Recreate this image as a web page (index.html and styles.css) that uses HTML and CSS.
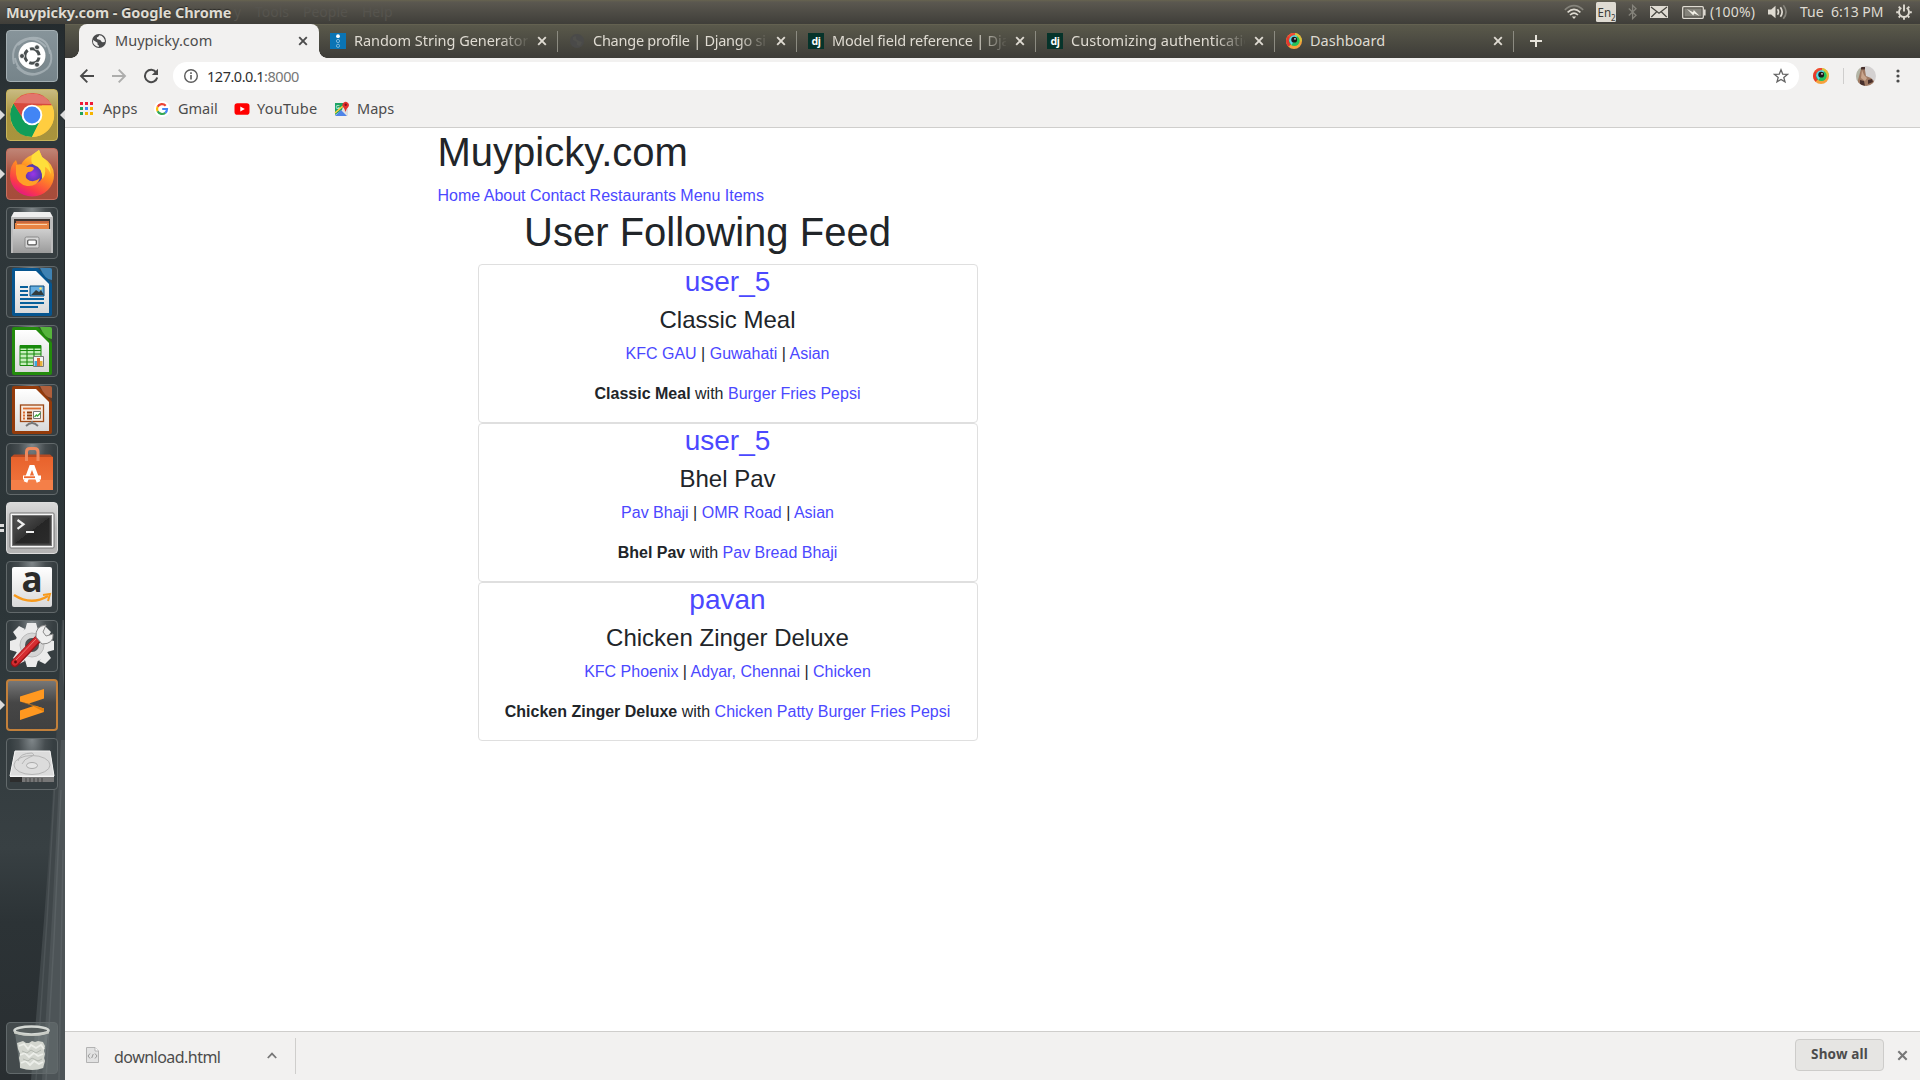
FILE: index.html
```html
<!DOCTYPE html>
<html lang="en">
<head>
<meta charset="utf-8">
<title>Muypicky.com</title>
<link rel="stylesheet" href="styles.css">
</head>
<body>
<svg class="defs" width="0" height="0" aria-hidden="true">
  <defs>
    <linearGradient id="paper" x1="0" y1="0" x2="0" y2="1"><stop offset="0" stop-color="#fff"/><stop offset="1" stop-color="#d9d9d9"/></linearGradient>
    <linearGradient id="steel" x1="0" y1="0" x2="0" y2="1"><stop offset="0" stop-color="#cfcfcf"/><stop offset="1" stop-color="#9b9b9b"/></linearGradient>
    <linearGradient id="flame" x1=".8" y1="0" x2=".3" y2="1"><stop offset="0" stop-color="#fff04a"/><stop offset=".45" stop-color="#ff9022"/><stop offset=".8" stop-color="#fb3b47"/><stop offset="1" stop-color="#e31587"/></linearGradient>
    <linearGradient id="bag" x1="0" y1="0" x2="0" y2="1"><stop offset="0" stop-color="#e8622c"/><stop offset="1" stop-color="#f1773f"/></linearGradient>
    <linearGradient id="screen" x1="0" y1="0" x2="1" y2="1"><stop offset="0" stop-color="#555"/><stop offset=".5" stop-color="#333"/><stop offset=".5" stop-color="#262626"/><stop offset="1" stop-color="#2b2b2b"/></linearGradient>
    <radialGradient id="violet"><stop offset="0" stop-color="#9a35e8"/><stop offset="1" stop-color="#4a38a5"/></radialGradient>
    <symbol id="close" viewBox="0 0 10 10"><path d="M1.2 1.2l7.6 7.6M8.8 1.2L1.2 8.8" stroke="currentColor" stroke-width="1.9" fill="none"/></symbol>
    <symbol id="dj" viewBox="0 0 16 16"><rect width="16" height="16" fill="#06332a"/><text x="8" y="11.6" text-anchor="middle" font-family="Noto Sans, sans-serif" font-weight="700" font-size="10.5" letter-spacing="-.4" fill="#fff">dj</text></symbol>
    <symbol id="eye" viewBox="0 0 16 16"><circle cx="8" cy="8" r="8" fill="#f6a13c"/><path d="M2 2.7A8 8 0 0 0 2.4 13.700L5.500 11V4z" fill="#e4382f"/><path d="M2 2.700A8 8 0 0 1 9 0l1.500 4L4 6z" fill="#ef4a36"/><path d="M9 0a8 8 0 0 1 7 8l-3 1-4-6z" fill="#d9c33d"/><circle cx="8.400" cy="7.700" r="5.300" fill="#25c25b"/><path d="M3.100 7.700a5.300 5.300 0 0 1 8-4.600L8.400 8l-3 4z" fill="#59d6e8"/><circle cx="8.200" cy="6.700" r="2.900" fill="#1c1719"/><circle cx="9" cy="5.800" r=".9" fill="#ddd"/></symbol>
  </defs>
</svg>

<header class="panel">
  <div class="panel-left">
    <span class="panel-title">Muypicky.com - Google Chrome</span>
    <span class="ghost ghost-y">y</span><span class="ghost ghost-tools">Tools</span><span class="ghost ghost-people">People</span><span class="ghost ghost-help">Help</span>
  </div>
  <div class="indicators">
    <svg class="i-wifi" width="20" height="16" viewBox="0 0 20 16" fill="none" stroke="#dfdbd2" stroke-width="1.6"><path d="M.8 5.8Q10-2.6 19.2 5.8" stroke="#85837b"/><path d="M3.600 8.400Q10 2.300 16.400 8.400M6 11Q10 7.200 14 11"/><path d="M7.800 12.400h4.400L10 15z" fill="#dfdbd2" stroke="none"/></svg>
    <svg class="i-lang" width="20" height="20" viewBox="0 0 20 20"><rect width="20" height="20" rx="1.5" fill="#dfdbd2"/><text x="1.6" y="15" font-size="12.5" textLength="13.5" lengthAdjust="spacingAndGlyphs" fill="#3c3b37">En</text><text x="15" y="18.5" font-size="8" fill="#3c3b37">2</text></svg>
    <svg class="i-bt" width="9" height="16" viewBox="0 0 9 16" fill="none" stroke="#85837b" stroke-width="1.3"><path d="M.8 4.500L8 11.200 4.600 14.600V1.400L8 4.800.8 11.500"/></svg>
    <svg class="i-mail" width="18" height="12" viewBox="0 0 18 12"><rect width="18" height="12" fill="#dfdbd2"/><path d="M1 1l8 6.300L17 1M1.300 11L6.500 6M16.700 11L11.500 6" stroke="#45443e" stroke-width="1.200" fill="none"/></svg>
    <svg class="i-bat" width="24" height="13" viewBox="0 0 24 13"><rect x=".7" y=".7" width="20.6" height="11.600" rx="1" fill="none" stroke="#dfdbd2" stroke-width="1.300"/><rect x="2.500" y="2.500" width="17" height="8" fill="#85837b"/><path d="M22 3.500h1.600v6H22z" fill="#dfdbd2"/><path d="M5 3l6 3.200.8-2.200 5.800 6-5.400-2.500-.9 2z" fill="#f2efe6"/></svg>
    <span class="i-pct">(100%)</span>
    <svg class="i-vol" width="20" height="16" viewBox="0 0 20 16" fill="none" stroke="#dfdbd2" stroke-width="1.7"><path d="M0 5.500h3.200L7.500 1.800v12.400L3.200 10.500H0z" fill="#dfdbd2" stroke="none"/><path d="M9.500 5.300q2 2.700 0 5.400M12.400 3.200q3.500 4.800 0 9.600"/><path d="M15.300 1.300q5.500 6.700 0 13.400" stroke="#85837b"/></svg>
    <span class="i-clock">Tue&nbsp; 6:13 PM</span>
    <svg class="i-gear" width="16" height="16" viewBox="0 0 16 16" fill="none" stroke="#dfdbd2"><path d="M5.300 3.800a5 5 0 1 0 5.400 0" stroke-width="1.900"/><path d="M8 .5v7M2.700 2.700L4 4M13.300 2.700L12 4M.2 8.300h2.300M13.500 8.300h2.300M2.700 13.500L4 12.200M13.300 13.500L12 12.200M8 13.500v2.300" stroke-width="1.900"/></svg>
  </div>
</header>

<div class="desktop">
<nav class="launcher">
  <svg class="wall" width="65" height="1056" viewBox="0 24 65 1056" preserveAspectRatio="none">
    <defs><linearGradient id="wl" x1="0" y1="0" x2="0" y2="1"><stop offset="0" stop-color="#242b2e"/><stop offset=".1" stop-color="#2f373a"/><stop offset=".55" stop-color="#2c3538"/><stop offset=".78" stop-color="#384043"/><stop offset=".85" stop-color="#2c3336"/><stop offset="1" stop-color="#292e31"/></linearGradient></defs>
    <rect y="24" width="65" height="1056" fill="url(#wl)"/>
    <path d="M62 620Q56 760 44 920L31 1080H65V620z" fill="#40474a"/>
    <path d="M61 740L53 900 42 1080H65V740z" fill="#4d5457"/>
    <path d="M55 780L47 920 36 1080M64 620Q61 660 65 690" stroke="#4d5457" stroke-width="1.500" fill="none"/>
    <path d="M61 790L54 940 46 1080M63 850L59 1080" stroke="#596063" stroke-width="1.500" fill="none"/>
    <path d="M64.500 24V700" stroke="#24292b"/>
  </svg>

  <div class="tile t-ubuntu"><svg viewBox="0 0 52 52"><path d="M8 34Q3 12 24 8Q42 6 44 24M12 15Q26 2 40 17M44 20Q50 40 29 44Q12 44 9 28M42 38Q25 52 11 37" fill="none" stroke="#c5ced1" stroke-width="2" opacity=".5"/><circle cx="26" cy="26.500" r="13.800" fill="#7b8588"/><circle cx="26" cy="25.500" r="13.500" fill="#fff"/><circle cx="26" cy="26" r="7.200" fill="none" stroke="#494f50" stroke-width="3" stroke-dasharray="12.500 2.580" stroke-dashoffset="-1.500"/><g fill="#494f50" stroke="#fff" stroke-width=".8"><circle cx="16" cy="26" r="2.500"/><circle cx="31" cy="17.300" r="2.500"/><circle cx="31" cy="34.700" r="2.500"/></g></svg></div>
  <div class="tile t-chrome"><i class="mark"></i><i class="mark-right"></i><svg viewBox="0 0 52 52"><circle cx="26" cy="26" r="22" fill="#ffcd40"/><path d="M7.500 14.500A22 22 0 0 0 26 48l8-16-15 0z" fill="#109d59"/><path d="M7.500 14.500A22 22 0 0 1 46 16.500H26L17 30z" fill="#d8493d"/><path d="M8 14A22 22 0 0 1 45 15z" fill="#fff" opacity=".25"/><path d="M46 16.500A22 22 0 0 1 26 48l10-20V16.500z" fill="#ffcd40"/><circle cx="26" cy="26" r="10.300" fill="#fff"/><circle cx="26" cy="26" r="8.400" fill="#4285f4"/></svg></div>
  <div class="tile t-firefox"><i class="mark"></i><svg viewBox="0 0 52 52"><path d="M26 7L33 2l3 7q12 7 12 18A22 21 0 0 1 4 28Q4 17 10 12l2 6 3-1q3-7 11-10z" fill="url(#flame)"/><circle cx="27" cy="26" r="10" fill="url(#violet)"/><path d="M10 17q7-2 11 2 5-1 7 1-1 4-6 4-4 4-1 7 6 5 13-1-3 9-13 8-10-2-11-12z" fill="#ffa026"/><path d="M26 7L33 2l3 7q8 5 9 17-3-6-6-7 1 9-3 12 1-11-8-14-4-2-2-10z" fill="#fedf3b"/></svg></div>
  <div class="tile"><svg viewBox="0 0 52 52"><path d="M8 5h36l3 5v36H5V10z" fill="#bdbdbd"/><path d="M8 5h36l2.500 5h-41z" fill="#efefef"/><path d="M8 12h36v12H8z" fill="#3a3330"/><path d="M10 14h33v3H10z" fill="#c7683f"/><path d="M9 16h34v7H9z" fill="#e88443"/><path d="M11 17.500h30" stroke="#f9d1ad"/><path d="M7 22h38v24H7z" fill="url(#steel)"/><rect x="19" y="30" width="14" height="11" rx="1.500" fill="#d6d6d6" stroke="#888"/><rect x="21.700" y="33" width="8.600" height="4.800" rx="1" fill="#fff" stroke="#555" stroke-width="1.200"/></svg></div>
  <div class="tile"><svg viewBox="0 0 52 52"><path d="M8 2h36q2 0 2 2v44q0 2-2 2H8q-2 0-2-2V4q0-2 2-2z" fill="#06558f"/><path d="M32 2h12q2 0 2 2v14z" fill="#2b4a60"/><path d="M9 5h21l13 13v29H9z" fill="url(#paper)"/><path d="M34 2h10q2 0 2 2v10q-7 0-12-12z" fill="#3f82b3"/><path d="M14 21h8M14 25h8M14 29h8M14 33h24M14 37h24M14 41h18" stroke="#08609b" stroke-width="1.800"/><path d="M24 20h14v10H24z" fill="#66aee0" stroke="#064b7d"/><path d="M25 29l5-5 3 2 2-2 3 5z" fill="#333c3d"/><circle cx="34.500" cy="22.500" r="1.300" fill="#ffe36a"/></svg></div>
  <div class="tile"><svg viewBox="0 0 52 52"><path d="M8 2h36q2 0 2 2v44q0 2-2 2H8q-2 0-2-2V4q0-2 2-2z" fill="#238b0c"/><path d="M32 2h12q2 0 2 2v14z" fill="#2f5a28"/><path d="M9 5h21l13 13v29H9z" fill="url(#paper)"/><path d="M34 2h10q2 0 2 2v10q-7 0-12-12z" fill="#56b53c"/><path d="M14 20.500h21v20H14z" fill="#c6eebc" stroke="#198a0c"/><path d="M14 22h21" stroke="#198a0c" stroke-width="3"/><path d="M14 25.500h21M14 29h21M14 33h21M14 37h21M21 20v20M28 20v20" stroke="#198a0c" stroke-width="1.100"/><path d="M27.500 31.500h10v10h-10z" fill="#f3f3f3" stroke="#777"/><path d="M28.500 36h2.500v5h-2.500z" fill="#3ba8de"/><path d="M31 33h3v8h-3z" fill="#df6b35"/><path d="M34 36h2.500v5H34z" fill="#e6b23c"/></svg></div>
  <div class="tile"><svg viewBox="0 0 52 52"><path d="M8 2h36q2 0 2 2v44q0 2-2 2H8q-2 0-2-2V4q0-2 2-2z" fill="#943b0b"/><path d="M32 2h12q2 0 2 2v14z" fill="#5f3a28"/><path d="M9 5h21l13 13v29H9z" fill="url(#paper)"/><path d="M34 2h10q2 0 2 2v10q-7 0-12-12z" fill="#b05f3b"/><rect x="14.500" y="21" width="23" height="16.500" fill="#f6eadf" stroke="#9d4714" stroke-width="1.300"/><path d="M17 24.500h18" stroke="#db6d31" stroke-width="1.800"/><path d="M17 28.500h2M17 31.500h2M17 34.500h2" stroke="#db6d31" stroke-width="2"/><path d="M21 28.500h5M21 31.500h5M21 34.500h5" stroke="#883a0c" stroke-width="2"/><path d="M27.500 27.500h7v7h-7z" fill="#fff" stroke="#777"/><path d="M28.500 33l2-2 1 1 3-3" stroke="#3aa63c" stroke-width="1.300" fill="none"/><path d="M20 42q6-6 12 0M26 37v2" fill="none" stroke="#777" stroke-width="1.800"/></svg></div>
  <div class="tile"><svg viewBox="0 0 52 52"><path d="M5 14h42v33H5z" fill="url(#bag)"/><path d="M5 14l3-2.500h36l3 2.500z" fill="#b94a22"/><path d="M20.500 18V9q0-3.500 3.500-3.500h4.500Q32 5.500 32 9v9" fill="none" stroke="#ef8a5f" stroke-width="3"/><path d="M5 37h42v10H5z" fill="#f47f48"/><path d="M19.500 39L25 24h2l5.500 15" fill="none" stroke="#fff" stroke-width="3.800"/><path d="M17 34.500h18" stroke="#fff" stroke-width="4"/><path d="M18 34.200h11" stroke="#ee6930" stroke-width="1.800"/></svg></div>
  <div class="tile t-term"><i class="mark-two"></i><svg viewBox="0 0 52 52"><rect x="4" y="11" width="44" height="35" rx="1" fill="#f7f7f7" stroke="#727272"/><rect x="6.500" y="13.500" width="39" height="30" fill="#444" stroke="#777"/><rect x="8.500" y="15.500" width="35" height="26" fill="url(#screen)"/><path d="M11.500 18l6 4.300-6 4.500" fill="none" stroke="#eee" stroke-width="2.200"/><path d="M20 30h8" stroke="#eee" stroke-width="2"/></svg></div>
  <div class="tile"><svg viewBox="0 0 52 52"><rect x="6" y="6" width="40" height="40" rx="2" fill="url(#paper)"/><text x="26" y="31" text-anchor="middle" font-family="Open Sans, sans-serif" font-weight="700" font-size="35" fill="#2b2b2b">a</text><path d="M8 34q17 11 34 1" stroke="#f79a1c" stroke-width="2.500" fill="none"/><path d="M37 34l7-1-2 7" stroke="#f79a1c" stroke-width="2" fill="none"/></svg></div>
  <div class="tile"><svg viewBox="0 0 52 52"><g fill="#ebebeb"><circle cx="26" cy="25" r="17"/><path d="M21 3h9l2 7H19zM21 47h9l2-7H19zM4 21v9l7 2V19zM48 21v9l-7 2V19zM7 12l6-6 6 3-8 9zM45 12l-6-6-6 3 8 9zM7 38l6 6 6-3-8-9zM45 38l-6 6-6-3 8-9z"/></g><circle cx="26" cy="25" r="12" fill="#d5d5d5" stroke="#bbb"/><circle cx="26" cy="25" r="7" fill="#4b5052"/><path d="M9 43L33 18" stroke="#9a1418" stroke-width="8" stroke-linecap="round"/><path d="M9 42.500L31 19.500" stroke="#d52c30" stroke-width="6" stroke-linecap="round"/><path d="M10 40L30 19" stroke="#ef7674" stroke-width="1"/><path d="M30 17q-1-11 10-12l-3 7 3 4 7-2q1 10-11 10z" fill="#efefef" stroke="#8c8c8c"/><circle cx="9.500" cy="42" r="1.400" fill="#5e0c0e"/></svg></div>
  <div class="tile t-sublime"><i class="mark"></i><svg viewBox="0 0 52 52"><path d="M14 17.500L38 10v9.500L23 24.500l15 5V33L14 41v-9.500l15-5-15-4z" fill="#ff9820"/><path d="M14 22.500L38 29.500V33l-11-6z" fill="#e27f0c"/></svg></div>
  <div class="tile"><svg viewBox="0 0 52 52"><path d="M9 13h35l4 25v6H4v-6z" fill="#cfcfcf"/><path d="M9 13h35l4 25H4z" fill="#dcdcdc" stroke="#f2f2f2"/><path d="M4 38h44v6H4z" fill="#777"/><path d="M4 38h44v1H4z" fill="#f5f5f5"/><path d="M4 39h12v5H4z" fill="#2d2d2d"/><path d="M20 40v4M24 40v4M28 40v4M32 40v4M36 40v4" stroke="#444"/><ellipse cx="26" cy="27" rx="18" ry="9.500" fill="none" stroke="#b5b5b5"/><ellipse cx="26" cy="27.500" rx="5.500" ry="3" fill="#e5e5e5" stroke="#aaa"/><path d="M12 23q2-8 14-8 4 2-2 4t-8 7" fill="none" stroke="#b5b5b5"/></svg></div>
  <div class="tile t-trash"><svg viewBox="0 0 52 52"><path d="M9 11h33l-4 35q-12 4-24 0z" fill="#929b9b" opacity=".4"/><path d="M11 21l3 -1 3-1 3 2 3 0 3-2 3 1 3-1 5 1 2 4-1 5 1 3-1 4 1 3-2 7q-10 4-23 0l0-5-1-5 1-4-2-5z" fill="#d3d6cf"/><path d="M13 24l5-2 4 5 3-4 5 3 5-3 3 4M14 33l5-2 4 4 5-4 4 3 5-2M15 41l5-2 4 4 4-4 5 3 4-2" stroke="#eceee9" stroke-width="1.800" fill="none"/><path d="M16 29l5 2 4-3 5 3 5-3M17 37l5 2 4-3 6 3 4-2" stroke="#b3b8b0" fill="none"/><ellipse cx="25.500" cy="8.500" rx="17" ry="4" fill="#555c5c" stroke="#d4d8d4" stroke-width="2.600"/><path d="M8 9q17 7 35 0v2.500q-17 5-35 0z" fill="#c9ccc5"/></svg></div>
</nav>

<section class="window">
  <div class="tabs">
    <div class="tab active"><svg class="fav" width="16" height="16" viewBox="0 0 16 16"><circle cx="8" cy="8" r="7" fill="#4a4b4c"/><path d="M8.200 2.300q-.5 2-2.400 2.200-.3 2 1.700 2 2.300.1 2.700 1.700.8 1.500 2.700.8l.9 0A6 6 0 0 0 8.200 2.300zM2 7l4.500 2.800v1.600l1.300 1v1.500A6 6 0 0 1 2 7z" fill="#f2f1f0"/></svg><span class="tab-title w1">Muypicky.com</span><svg class="x" width="10" height="10"><use href="#close"/></svg></div>
    <div class="tab"><svg class="fav" width="16" height="16" viewBox="0 0 16 16"><rect width="16" height="16" fill="#0a74b5"/><circle cx="8" cy="3.200" r="1.900" fill="#fff"/><g fill="none" stroke="#77b5da"><circle cx="8" cy="8" r="1.600"/><circle cx="8" cy="12.800" r="1.600"/></g></svg><span class="tab-title w2 fade">Random String Generator</span><svg class="x" width="10" height="10"><use href="#close"/></svg></div>
    <div class="tab"><svg class="fav" width="16" height="16" viewBox="0 0 16 16"><circle cx="8" cy="8" r="7" fill="#4a4a49"/><path d="M4 4l3-1v3l3 2 3 1-2 4-3-1V9L4 7z" fill="#50504c"/></svg><span class="tab-title w3 fade">Change profile | Django si</span><svg class="x" width="10" height="10"><use href="#close"/></svg></div>
    <div class="tab"><svg class="fav" width="16" height="16"><use href="#dj"/></svg><span class="tab-title w4 fade">Model field reference | Dja</span><svg class="x" width="10" height="10"><use href="#close"/></svg></div>
    <div class="tab"><svg class="fav" width="16" height="16"><use href="#dj"/></svg><span class="tab-title w5 fade">Customizing authenticatio</span><svg class="x" width="10" height="10"><use href="#close"/></svg></div>
    <div class="tab"><svg class="fav" width="16" height="16"><use href="#eye"/></svg><span class="tab-title w6">Dashboard</span><svg class="x" width="10" height="10"><use href="#close"/></svg></div>
    <svg class="plus" width="12" height="12" viewBox="0 0 12 12"><path d="M6 0v12M0 6h12" stroke="#e6e3da" stroke-width="2"/></svg>
  </div>

  <div class="toolbar">
    <svg class="nav-ic" width="16" height="16" viewBox="0 0 16 16" fill="none" stroke="#4a4a4a" stroke-width="1.900"><path d="M15 8H2.500M8.300 1.600L2 8l6.300 6.400"/></svg>
    <svg class="nav-ic" width="16" height="16" viewBox="0 0 16 16" fill="none" stroke="#adadac" stroke-width="1.900"><path d="M1 8h12.500M7.700 1.600L14 8l-6.300 6.400"/></svg>
    <svg class="nav-ic" width="16" height="16" viewBox="0 0 16 16"><path d="M13.300 4.500A6.200 6.200 0 1 0 14.200 9.500" fill="none" stroke="#4a4a4a" stroke-width="2"/><path d="M15 .8V7H8.800z" fill="#4a4a4a"/></svg>
    <div class="omnibox">
      <svg width="16" height="16" viewBox="0 0 16 16"><circle cx="8" cy="8" r="6.300" fill="none" stroke="#5c5c5c" stroke-width="1.400"/><path d="M8 7v4.500M8 4.300v1.700" stroke="#5c5c5c" stroke-width="1.600"/></svg>
      <span class="url">127.0.0.1<span class="port">:8000</span></span>
      <svg class="star" width="16" height="16" viewBox="0 0 16 16"><path d="M8 1.800l1.700 4.300 4.700.3-3.600 3 1.200 4.500L8 11.400l-4 2.500 1.200-4.500-3.600-3 4.700-.3z" fill="none" stroke="#656565" stroke-width="1.300"/></svg>
    </div>
    <svg class="ext" width="16" height="16"><use href="#eye"/></svg>
    <span class="divider"></span>
    <svg class="avatar" width="20" height="20" viewBox="0 0 20 20"><defs><clipPath id="ac"><circle cx="10" cy="10" r="10"/></clipPath></defs><g clip-path="url(#ac)"><path d="M0 0h20v20H0z" fill="#d4d1d1"/><path d="M0 0h5v20H0z" fill="#b3b5a6"/><path d="M5 3q3-3 4 1l1 6 5 2 3 3-1 6H2l0-7z" fill="#a07a63"/><path d="M5 1h4v2.500H5zM4 14l4 1 1 5H4zM12 14l4-1 1 3-5 2z" fill="#48302c"/><path d="M6 4l2 5 3 3-2 3-4-3z" fill="#c9a58c"/></g></svg>
    <svg class="dots" width="4" height="14" viewBox="0 0 4 14" fill="#4a4a4a"><circle cx="2" cy="2" r="1.600"/><circle cx="2" cy="7" r="1.600"/><circle cx="2" cy="12" r="1.600"/></svg>
  </div>

  <div class="bookmarks">
    <span class="bm"><svg width="14" height="14" viewBox="0 0 14 14"><path d="M0 0h3v3H0zM5 0h3v3H5zM10 0h3v3h-3z" fill="#ef1b39"/><path d="M0 5h3v3H0z" fill="#1fa35b"/><path d="M5 5h3v3H5z" fill="#4285f4"/><path d="M10 5h3v3h-3zM5 10h3v3H5zM10 10h3v3h-3z" fill="#f5b400"/><path d="M0 10h3v3H0z" fill="#1fa35b"/></svg><b class="b1">Apps</b></span>
    <span class="bm"><svg width="16" height="16" viewBox="0 0 16 16"><circle cx="8" cy="8" r="8" fill="#fff"/><g fill="none" stroke-width="2.200"><path d="M11.700 4.700A5 5 0 0 0 3.600 5.700" stroke="#ea4335"/><path d="M3.600 5.700a5 5 0 0 0 0 4.600" stroke="#fbbc05"/><path d="M3.600 10.300a5 5 0 0 0 7.700 1.500" stroke="#34a853"/><path d="M11.300 11.800A5 5 0 0 0 13 8H8.200" stroke="#4285f4"/></g></svg><b class="b2">Gmail</b></span>
    <span class="bm"><svg width="16" height="16" viewBox="0 0 16 16"><rect x=".5" y="2.300" width="15" height="11.400" rx="2.800" fill="#f00"/><path d="M6.300 5.500v5L10.800 8z" fill="#fff"/></svg><b class="b3">YouTube</b></span>
    <span class="bm"><svg width="16" height="16" viewBox="0 0 16 16"><rect x="1" y="2" width="13" height="13" rx="1" fill="#e8e8e8"/><path d="M1 2h9L8 9l-7 5z" fill="#1fa463"/><path d="M1 15l6-6 6 6z" fill="#4f84e8"/><path d="M1 12L9 5" stroke="#ffcf3f" stroke-width="1.500"/><path d="M8 9l6 6V8z" fill="#ddd"/><text x="1.800" y="7.500" font-size="5.500" fill="#fff">G</text><path d="M11.500 11Q11 8 9 6a3.200 3.200 0 1 1 5.300 0q-2.300 2-2.800 5z" fill="#e5302c"/><circle cx="11.700" cy="3.800" r="1.200" fill="#84131b"/></svg><b class="b4">Maps</b></span>
  </div>

  <main class="page">
    <div class="container">
      <h1>Muypicky.com</h1>
      <div class="menu"><a>Home</a> <a>About</a> <a>Contact</a> <a>Restaurants</a> <a>Menu Items</a></div>
      <div class="feed">
        <h1>User Following Feed</h1>
        <div class="cards">
          <article class="card"><h3><a>user_5</a></h3><h4>Classic Meal</h4><p><a>KFC GAU</a> | <a>Guwahati</a> | <a>Asian</a></p><p><strong>Classic Meal</strong> with <a>Burger Fries Pepsi</a></p></article>
          <article class="card"><h3><a>user_5</a></h3><h4>Bhel Pav</h4><p><a>Pav Bhaji</a> | <a>OMR Road</a> | <a>Asian</a></p><p><strong>Bhel Pav</strong> with <a>Pav Bread Bhaji</a></p></article>
          <article class="card"><h3><a>pavan</a></h3><h4>Chicken Zinger Deluxe</h4><p><a>KFC Phoenix</a> | <a>Adyar, Chennai</a> | <a>Chicken</a></p><p><strong>Chicken Zinger Deluxe</strong> with <a>Chicken Patty Burger Fries Pepsi</a></p></article>
        </div>
      </div>
    </div>
  </main>

  <footer class="downloads">
    <svg class="file" width="13" height="16" viewBox="0 0 13 16"><path d="M.5.500h8.500l3.500 3.500v11.500H.5z" fill="#e2e2e2" stroke="#b3b3b3"/><path d="M9 .5V4h3.500" fill="#fff" stroke="#b3b3b3"/><path d="M4 6.500L2 9l2 2.500M9 6.500L11 9l-2 2.500M7.300 7L5.700 11" fill="none" stroke="#999"/></svg>
    <span class="fname">download.html</span>
    <svg class="caret" width="10" height="7" viewBox="0 0 10 7"><path d="M.8 6L5 1.600 9.200 6" fill="none" stroke="#777" stroke-width="1.800"/></svg>
    <span class="sep"></span>
    <button class="show">Show all</button>
    <svg class="dx" width="11" height="11"><use href="#close"/></svg>
  </footer>
</section>
</div>
</body>
</html>
```
FILE: styles.css
```css
* { box-sizing: border-box; }
html, body { margin: 0; height: 100%; overflow: hidden; }
body { font-family: "Noto Sans", sans-serif; font-size: 14.5px; color: #4c4c4c; display: flex; flex-direction: column; }
svg { display: block; flex: none; }
.defs { position: absolute; }

.panel { height: 24px; flex: none; display: flex; align-items: center; justify-content: space-between; background: linear-gradient(#67634f 0, #5b5850 2px, #3f3e39 24px); color: #dfdbd2; font-size: 14px; line-height: 24px; }
.panel-left { display: flex; padding-left: 6px; white-space: nowrap; }
.panel-title { width: 228px; font-weight: 700; font-size: 14.5px; letter-spacing: -.07px; text-shadow: 0 -1px 1px #2c2b28; }
.ghost { color: #56544e; }
.ghost-y { width: 21px; }
.ghost-tools { width: 48px; }
.ghost-people { width: 59px; }
.indicators { display: flex; align-items: center; width: 356px; }
.i-lang { margin-left: 12px; }
.i-bt { margin-left: 12px; }
.i-mail { margin-left: 13px; }
.i-bat { margin-left: 14px; }
.i-pct { margin-left: 4px; width: 58px; white-space: nowrap; letter-spacing: .2px; }
.i-clock { margin-left: 12px; width: 96px; white-space: nowrap; }

.desktop { flex: 1; display: flex; min-height: 0; }
.launcher { width: 65px; flex: none; position: relative; padding: 6px 7px 6px 6px; display: flex; flex-direction: column; gap: 7px; overflow: hidden; }
.wall { position: absolute; inset: 0; }
.tile { position: relative; width: 52px; height: 52px; flex: none; border-radius: 4px; border: 1px solid #62696b; background: radial-gradient(ellipse at 50% 0, #80878a 0, #454c4f 38%, transparent 62%), #363e41; }
.tile svg { width: 52px; height: 52px; margin: -1px; overflow: visible; }
.t-ubuntu { background: linear-gradient(#87949a, #76848a); border-color: #a4afb3; }
.t-chrome { background: linear-gradient(#c9bb81, #a7923e 50%, #a9943c); border-color: #c9b55c; }
.t-firefox { background: linear-gradient(#c08576, #a84f3c 50%, #a64c3b); border-color: #c7705f; }
.t-term { background: linear-gradient(#d9d9d9, #b8b8b8 50%, #b4b4b4); border-color: #dcdcdc; }
.t-sublime { background: linear-gradient(#777, #464646 45%, #404040); border: 2px solid #c2803b; }
.t-sublime svg { margin: -2px; }
.t-trash { margin-top: auto; background: rgba(130, 140, 140, .3); }
.mark, .mark-right, .mark-two { position: absolute; top: 20px; border: 5px solid transparent; }
.mark { left: -7px; border-left-color: #dcdcdc; border-right: 0; }
.mark-right { right: -8px; border-right-color: #dcdcdc; border-left: 0; }
.t-sublime .mark { left: -8px; top: 19px; }
.mark-two { left: -7px; top: 21px; width: 4px; height: 8px; border: solid #dcdcdc; border-width: 3px 0; }

.window { flex: 1; min-width: 0; display: flex; flex-direction: column; background: #f2f1f0; }
.tabs { height: 34px; flex: none; display: flex; align-items: center; padding-left: 14px; background: linear-gradient(#6c6956 0, #5a594b 1px, #3d3c38 34px); color: #dfdbd2; }
.tab { width: 239px; height: 34px; flex: none; display: flex; align-items: center; padding-left: 11px; position: relative; }
.tab:not(.active)::after { content: ""; position: absolute; right: 0; top: 7px; width: 1px; height: 21px; background: #8c8b81; }
.tab.active { width: 240px; background: #f2f1f0; color: #4c4c4c; border-radius: 8px 8px 0 0; padding-left: 12px; }
.tab.active::before, .tab.active::after { content: ""; position: absolute; bottom: 0; width: 8px; height: 8px; }
.tab.active::before { left: -8px; background: radial-gradient(circle at 0 0, transparent 7.5px, #f2f1f0 8px); }
.tab.active::after { right: -8px; background: radial-gradient(circle at 100% 0, transparent 7.5px, #f2f1f0 8px); }
.tab-title { margin-left: 8px; width: 174px; overflow: hidden; white-space: nowrap; line-height: 20px; letter-spacing: -.25px; margin-top: -2px; }
.w1 { letter-spacing: .03px; }
.w2 { letter-spacing: -.04px; }
.w4 { letter-spacing: -.2px; }
.w5 { letter-spacing: .1px; }
.w6 { letter-spacing: 0; }
.fade { -webkit-mask-image: linear-gradient(90deg, #000 145px, transparent 176px); mask-image: linear-gradient(90deg, #000 145px, transparent 176px); }
.x { margin-left: 9px; }
.plus { margin-left: 16px; }

.toolbar { height: 36px; flex: none; display: flex; align-items: center; padding-left: 14px; }
.nav-ic { margin-right: 16px; }
.omnibox { width: 1626px; height: 28px; background: #fff; border-radius: 14px; display: flex; align-items: center; padding: 0 10px; margin-left: -2px; }
.url { margin-left: 8px; color: #303030; flex: 1; letter-spacing: -.48px; line-height: 20px; margin-top: -1px; }
.port { color: #777; }
.ext { margin-left: 14px; }
.divider { width: 1px; height: 16px; margin: 0 12px 0 14px; background: #cfcecd; }
.dots { margin-left: 20px; }

.bookmarks { height: 34px; flex: none; display: flex; align-items: center; padding: 0 0 4px 15px; border-bottom: 1px solid #cfcecc; }
.bm { display: flex; align-items: center; }
.bm b { font-weight: 400; line-height: 20px; white-space: nowrap; margin: -2px 0 0 8px; }
.bm .b1 { width: 51px; margin-left: 9px; letter-spacing: .1px; }
.bm .b2 { width: 56px; margin-left: 8px; }
.bm .b3 { width: 77px; margin-left: 7px; letter-spacing: .25px; }
.bm .b4 { margin-left: 7px; }

.page { flex: 1; min-height: 0; background: #fff; color: #212529; font-family: "Liberation Sans", Arial, sans-serif; font-size: 16px; line-height: 24px; }
.container { width: 1140px; margin: 0 auto; padding: 0 15px; }
.page a { color: #4b48ff; }
.page h1, .page h3, .page h4 { font-weight: 400; margin: 0 0 8px; }
.page h1 { font-size: 40px; line-height: 48px; }
.page h3 { font-size: 28px; line-height: 33px; }
.page h4 { font-size: 24px; line-height: 28px; }
.feed { width: 540px; text-align: center; }
.cards { padding-left: 40px; }
.card { height: 159px; border: 1px solid #dfdfdf; border-radius: 4px; }
.card p { margin: 0 0 16px; }

.downloads { height: 49px; flex: none; border-top: 1px solid #cfcecc; display: flex; align-items: center; padding-left: 21px; padding-bottom: 1px; }
.file { margin-top: -1px; }
.fname { margin-left: 15px; width: 153px; font-size: 16px; letter-spacing: -.53px; line-height: 24px; margin-top: 2px; }
.sep { width: 1px; height: 36px; margin-left: 18px; margin-top: 1px; background: #cfcecc; }
.show { margin-left: auto; width: 89px; height: 32px; margin-top: -2px; border: 1px solid #cdccca; border-radius: 4px; background: #e6e5e3; color: #4c4c4c; font: 700 13.5px "Noto Sans", sans-serif; letter-spacing: .15px; padding: 0 0 2px; }
.dx { margin: -1px 12px 0 13px; color: #777; }
```
